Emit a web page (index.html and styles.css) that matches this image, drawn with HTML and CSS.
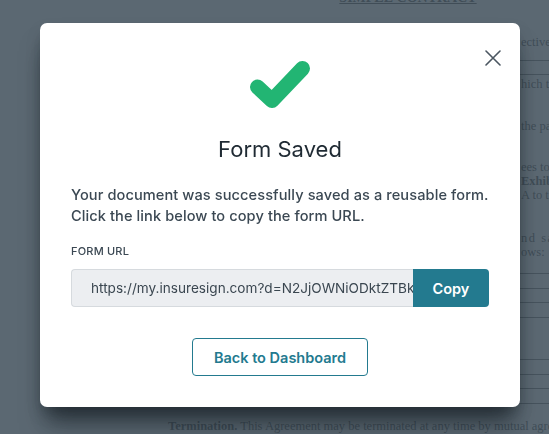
FILE: index.html
```html
<!DOCTYPE html>
<html lang="en">
<head>
<meta charset="utf-8">
<title>Form Saved</title>
<link rel="stylesheet" href="styles.css">
</head>
<body>
<div class="doc">
  <div class="doc-title">SIMPLE CONTRACT</div>
  <div class="doc-line l1">ective as of</div>
  <div class="doc-rule r1"></div>
  <div class="doc-rule r2"></div>
  <div class="doc-line l2">hich the</div>
  <div class="doc-line l3">the parties</div>
  <div class="doc-line l4">ees to</div>
  <div class="doc-line bold">Exhibit</div>
  <div class="doc-line">A to the</div>
  <div class="doc-line l5 justify">nd satis</div>
  <div class="doc-line">ows:</div>
  <div class="doc-rules">
    <div class="doc-rule"></div>
    <div class="doc-rule"></div>
    <div class="doc-rule"></div>
    <div class="doc-rule"></div>
  </div>
  <div class="doc-rules gap">
    <div class="doc-rule"></div>
    <div class="doc-rule"></div>
    <div class="doc-rule"></div>
    <div class="doc-rule"></div>
  </div>
  <div class="doc-para"><b>Termination.</b> This Agreement may be terminated at any time by mutual agreement of the parties.</div>
</div>

<div class="overlay">
  <div class="modal" role="dialog" aria-labelledby="modal-title">
    <button class="close" aria-label="Close">
      <svg width="16" height="16" viewBox="0 0 16 16" aria-hidden="true">
        <path d="M1 1 L15 15 M15 1 L1 15" stroke="#4b5661" stroke-width="1.6" stroke-linecap="round" fill="none"/>
      </svg>
    </button>
    <div class="check">
      <svg width="60" height="47" viewBox="0 0 60 47" aria-hidden="true">
        <path d="M7.5 26 L22 39.5 L52.5 7.5" stroke="#22b573" stroke-width="15" stroke-linecap="round" stroke-linejoin="round" fill="none"/>
      </svg>
    </div>
    <h2 id="modal-title" class="title">Form Saved</h2>
    <p class="message">Your document was successfully saved as a reusable form.<br>Click the link below to copy the form URL.</p>
    <label class="label" for="form-url">FORM URL</label>
    <div class="url-row">
      <input id="form-url" class="url-input" type="text" readonly value="https://my.insuresign.com?d=N2JjOWNiODktZTBkYjQtNDc3">
      <button class="copy-btn">Copy</button>
    </div>
    <div class="actions">
      <button class="back-btn">Back to Dashboard</button>
    </div>
  </div>
</div>
</body>
</html>
```

FILE: styles.css
```css
* { box-sizing: border-box; }

html, body {
  margin: 0;
  padding: 0;
  width: 549px;
  height: 434px;
  overflow: hidden;
  background: #ffffff;
}

/* Background document */
.doc {
  margin-left: 168px;
  width: 480px;
  margin-top: -10px;
  font-family: "Liberation Serif", "Times New Roman", serif;
  font-size: 12.5px;
  line-height: 14px;
  color: #222;
}
.doc-title {
  text-align: center;
  font-weight: bold;
  text-decoration: underline;
  font-size: 14px;
  line-height: 16px;
}
.doc-line {
  padding-left: 353px;
  white-space: nowrap;
}
.doc-line.bold { font-weight: bold; }
.l1 { margin-top: 29px; }
.doc-rule { height: 1px; background: #555; }
.r1 { margin-top: 11px; }
.r2 { margin-top: 13px; }
.l2 { margin-top: 2px; }
.l3 { margin-top: 28px; }
.l4 { margin-top: 27px; }
.l5 { margin-top: 29px; letter-spacing: 1.5px; }
.doc-rules {
  display: flex;
  flex-direction: column;
  gap: 13.7px;
  margin-top: 14px;
}
.doc-rules.gap { margin-top: 41px; }
.doc-para {
  margin-top: 15px;
  white-space: nowrap;
  font-size: 12.5px;
}

/* Overlay + modal */
.overlay {
  position: fixed;
  inset: 0;
  background: rgba(68, 83, 95, 0.88);
  padding: 23px 0 0 40px;
}

.modal {
  position: relative;
  width: 480px;
  height: 384px;
  background: #ffffff;
  border-radius: 7px;
  padding: 38px 31px 0;
  box-shadow: 0 22px 24px -6px rgba(10, 16, 22, 0.55), 0 8px 16px -4px rgba(10, 16, 22, 0.35);
  font-family: "Inter", "Noto Sans", sans-serif;
  display: flex;
  flex-direction: column;
}

.close {
  position: absolute;
  top: 27px;
  right: 19px;
  width: 16px;
  height: 16px;
  padding: 0;
  border: 0;
  background: none;
  display: flex;
}

.check {
  display: flex;
  justify-content: center;
  height: 47px;
}

.title {
  margin: 27px 0 0;
  text-align: center;
  font-size: 22px;
  font-weight: 400;
  line-height: 28px;
  color: #1f2a33;
}

.message {
  margin: 22px 0 0;
  font-size: 14.6px;
  font-weight: 500;
  line-height: 21px;
  letter-spacing: 0.08px;
  white-space: nowrap;
  color: #3b4853;
}

.label {
  margin-top: 17px;
  font-size: 11px;
  font-weight: 500;
  line-height: 14px;
  color: #3b4853;
  letter-spacing: 0.2px;
}

.url-row {
  display: flex;
  margin-top: 11px;
  height: 38px;
}

.url-input {
  flex: 1;
  min-width: 0;
  height: 38px;
  border: 1px solid #d6dade;
  border-right: 0;
  border-radius: 4px 0 0 4px;
  background: #eceef1;
  padding: 0 0 0 19px;
  font-family: inherit;
  font-size: 13.6px;
  font-weight: 400;
  color: #3a4650;
  outline: none;
}

.copy-btn {
  width: 76px;
  height: 38px;
  border: 0;
  border-radius: 0 4px 4px 0;
  background: #237a8f;
  color: #ffffff;
  font-family: inherit;
  font-size: 14.5px;
  font-weight: 600;
}

.actions {
  display: flex;
  justify-content: center;
  margin-top: 31px;
}

.back-btn {
  width: 176px;
  height: 38px;
  border: 1px solid #237a8f;
  border-radius: 4px;
  background: #ffffff;
  color: #237a8f;
  font-family: inherit;
  font-size: 14.5px;
  font-weight: 600;
}
```
